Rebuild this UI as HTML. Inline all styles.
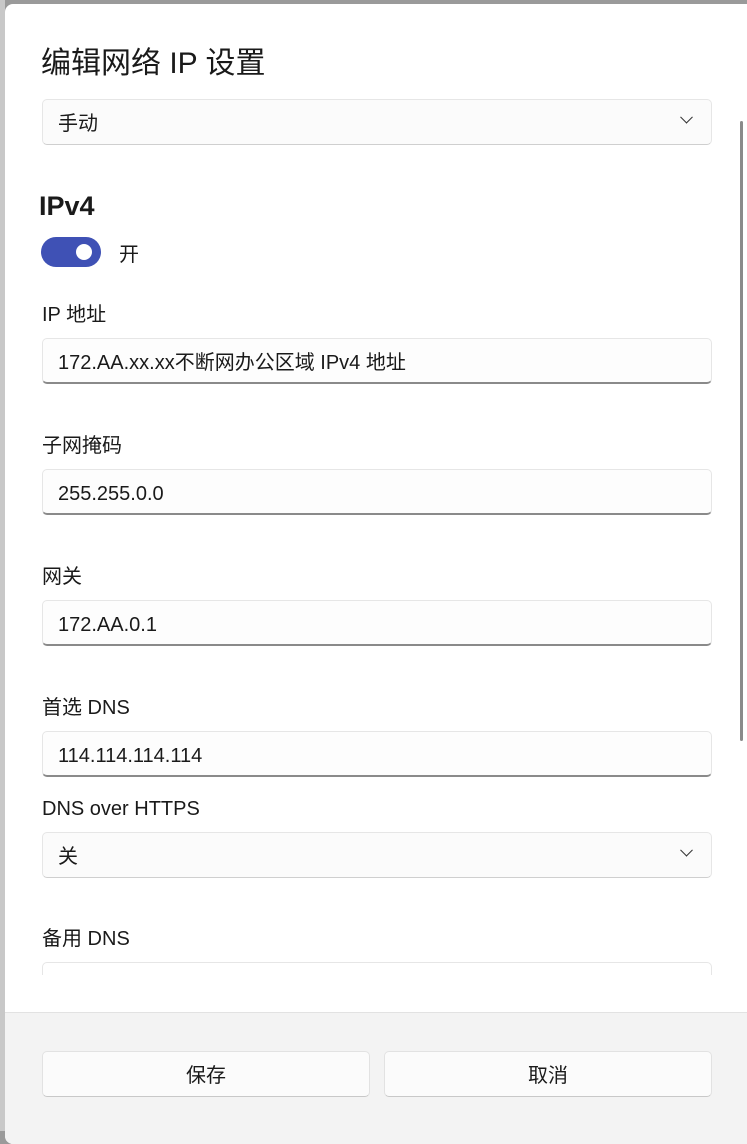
<!DOCTYPE html>
<html><head><meta charset="utf-8"><style>
*{margin:0;padding:0;box-sizing:border-box}
body{width:747px;height:1131px;background:#9a9a9a;position:relative;overflow:hidden;font-family:"Liberation Sans","Noto Sans CJK SC",sans-serif;color:#1a1a1a}
.bgtxt{position:absolute;left:0;top:0;width:5px;height:1131px;background:#c8c8c8}
.dlg{position:absolute;left:5px;top:4px;width:750px;height:1140px;background:#fff;border-radius:8px;overflow:hidden}
.a{position:absolute}
.lbl{position:absolute;left:37px;font-size:20px;line-height:24px}
.box{position:absolute;left:37px;width:670px;height:46px;background:#fdfdfd;border:1px solid #e6e6e6;border-radius:5px;font-size:20px;line-height:48px;padding-left:15px}
.tb{border-bottom:2px solid #8a8a8a}
.dd{border-bottom:1px solid #cfcfcf;background:#fbfbfb}
.chev{position:absolute;right:20px;top:17px;width:9px;height:9px;border-right:1.3px solid #333;border-bottom:1.3px solid #333;transform:rotate(45deg) translate(-3px,-3px)}
.foot{position:absolute;left:0;top:1008px;width:750px;height:140px;background:#f3f3f3;border-top:1px solid #e2e2e2}
.btn{position:absolute;top:1047px;height:46px;background:#fbfbfb;border:1px solid #e2e2e2;border-bottom:1px solid #c8c8c8;border-radius:5px;text-align:center;font-size:20px;line-height:48px}
</style></head><body>
<div class="bgtxt"></div>
<div class="dlg">
<div class="a" style="left:36px;top:42px;font-size:30px;line-height:36px">编辑网络 IP 设置</div>
<div class="box dd" style="top:95px">手动<div class="chev"></div></div>
<div class="a" style="left:34px;top:185px;font-size:27px;font-weight:bold;line-height:34px">IPv4</div>
<div class="a" style="left:36px;top:233px;width:60px;height:30px;border-radius:15px;background:#3f51b5"><div style="position:absolute;left:35px;top:7px;width:16px;height:16px;border-radius:8px;background:#fff"></div></div>
<div class="a" style="left:114px;top:239px;font-size:20px;line-height:24px">开</div>
<div class="lbl" style="top:299px">IP 地址</div>
<div class="box tb" style="top:334px">172.AA.xx.xx不断网办公区域 IPv4 地址</div>
<div class="lbl" style="top:430px">子网掩码</div>
<div class="box tb" style="top:465px">255.255.0.0</div>
<div class="lbl" style="top:561px">网关</div>
<div class="box tb" style="top:596px">172.AA.0.1</div>
<div class="lbl" style="top:692px">首选 DNS</div>
<div class="box tb" style="top:727px">114.114.114.114</div>
<div class="lbl" style="top:793px">DNS over HTTPS</div>
<div class="box dd" style="top:828px">关<div class="chev"></div></div>
<div class="lbl" style="top:923px">备用 DNS</div>
<div class="a" style="left:37px;top:958px;width:670px;height:13px;border:1px solid #e6e6e6;border-bottom:none;border-radius:5px 5px 0 0"></div>
<div class="a" style="left:735px;top:117px;width:3px;height:620px;background:#8a8a8a;border-radius:2px"></div>
<div class="foot"></div>
<div class="btn" style="left:37px;width:328px">保存</div>
<div class="btn" style="left:379px;width:328px">取消</div>
</div>
</body></html>
